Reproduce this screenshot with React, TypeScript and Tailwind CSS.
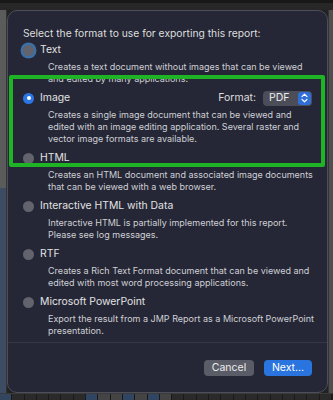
import React from 'react';

type RadioState = 'off' | 'on' | 'focus';

const OPTIONS: { label: string; desc: string[]; state: RadioState; format?: boolean }[] = [
  {
    label: 'Text',
    desc: ['Creates a text document without images that can be viewed', 'and edited by many applications.'],
    state: 'focus',
  },
  {
    label: 'Image',
    desc: [
      'Creates a single image document that can be viewed and',
      'edited with an image editing application. Several raster and',
      'vector image formats are available.',
    ],
    state: 'on',
    format: true,
  },
  {
    label: 'HTML',
    desc: ['Creates an HTML document and associated image documents', 'that can be viewed with a web browser.'],
    state: 'off',
  },
  {
    label: 'Interactive HTML with Data',
    desc: ['Interactive HTML is partially implemented for this report.', 'Please see log messages.'],
    state: 'off',
  },
  {
    label: 'RTF',
    desc: ['Creates a Rich Text Format document that can be viewed and', 'edited with most word processing applications.'],
    state: 'off',
  },
  {
    label: 'Microsoft PowerPoint',
    desc: ['Export the result from a JMP Report as a Microsoft PowerPoint', 'presentation.'],
    state: 'off',
  },
];

const RULER = [
  'bg-[#34465e]', 'bg-[#2a2a2a]', 'bg-[#2a2a2a]', 'bg-[#2a2a2a]', 'bg-[#2a2a2a]', 'bg-[#2a2a2a]',
  'bg-[#2a2a2a]', 'bg-[#2f4561]', 'bg-[#444]', 'bg-[#444]', 'bg-[#2f4561]', 'bg-[#444]',
  'bg-[#2f4561]', 'bg-[#444]', 'bg-[#2a2a2a]', 'bg-[#2a2a2a]', 'bg-[#2a2a2a]', 'bg-[#2a2a2a]',
  'bg-[#2a2a2a]', 'bg-[#2a2a2a]', 'bg-[#2a2a2a]', 'bg-[#2a2a2a]', 'bg-[#2a2a2a]', 'bg-[#2a2a2a]',
  'bg-[#2a2a2a]', 'bg-[#2a2a2a]', 'bg-[#2a2a2a]',
];

function Radio({ state }: { state: RadioState }) {
  if (state === 'on') {
    return (
      <span className="flex h-[11px] w-[11px] shrink-0 items-center justify-center rounded-full bg-[#2b76e5]">
        <span className="h-[4px] w-[4px] rounded-full bg-white" />
      </span>
    );
  }
  return (
    <span
      className={`h-[11px] w-[11px] shrink-0 rounded-full bg-[#62636c] ${
        state === 'focus' ? 'shadow-[0_0_0_2.5px_#3b6fa6]' : ''
      }`}
    />
  );
}

function FormatSelect() {
  return (
    <div className="ml-auto flex items-center gap-[7px]">
      <span className="text-[10.5px] text-[#dedede]">Format:</span>
      <div className="flex h-[15px] w-[49px] items-center justify-between rounded-[4px] bg-[#4b4d59] pl-[6px] pr-[1px]">
        <span className="text-[10.5px] text-[#ececec]">PDF</span>
        <span className="flex h-[13px] w-[13px] items-center justify-center rounded-[3px] bg-[#2f6fd8]">
          <svg width="7" height="10" viewBox="0 0 7 10" fill="none">
            <path d="M1 3.6 3.5 1.2 6 3.6M1 6.4 3.5 8.8 6 6.4" stroke="white" strokeWidth="1.2" strokeLinecap="round" strokeLinejoin="round" />
          </svg>
        </span>
      </div>
    </div>
  );
}

export default function App() {
  return (
    <div className="flex h-[400px] w-[333px] flex-col overflow-hidden bg-[#222] font-['Inter','Noto_Sans',sans-serif]">
      <div className="h-[10px] shrink-0 border-t-[3px] border-[#181818] bg-[#272727]" />
      <div className="flex min-h-0 flex-1">
        <div className="flex w-[7px] shrink-0 flex-col border-r border-[#333]">
          <div className="h-[178px] bg-[#5b5b5b]" />
          <div className="flex-1 bg-[#3d4c62]" />
        </div>
        <div className="relative flex w-[321px] shrink-0 flex-col rounded-[10px] border border-[#4c4e59] bg-[#252736]">
          <div className="px-[15px] pt-[15px]">
            <div className="h-[14px] text-[10.3px] leading-[14px] whitespace-nowrap text-[#dedede]">
              Select the format to use for exporting this report:
            </div>
            <div className="mt-[3px] flex flex-col gap-[6px]">
              {OPTIONS.map((o) => (
                <div key={o.label}>
                  <div className="flex h-[14px] items-center gap-[6px]">
                    <Radio state={o.state} />
                    <span className="text-[10.4px] leading-[14px] whitespace-nowrap text-[#e2e2e2]">{o.label}</span>
                    {o.format && <FormatSelect />}
                  </div>
                  <div className="mt-[4px] pl-[25px] text-[9px] leading-[12px] whitespace-nowrap text-[#cfd0d5]">
                    {o.desc.map((line) => (
                      <div key={line}>{line}</div>
                    ))}
                  </div>
                </div>
              ))}
            </div>
          </div>
          <div className="mt-[5px] h-px bg-[#363846]" />
          <div className="mt-[17px] flex justify-end gap-[10px] pr-[15px]">
            <button className="h-[16px] w-[50px] rounded-[4px] bg-[#5a5c67] text-[10.5px] text-[#ececec]">Cancel</button>
            <button className="h-[16px] w-[48px] rounded-[4px] bg-[#2a74e0] text-[10.5px] text-white">Next...</button>
          </div>

          <div className="pointer-events-none absolute left-[1px] top-[64px] h-[92px] w-[316px] rounded-[2px] border-[4px] border-[#1fb326]" />
        </div>
        <div className="flex-1 border-l border-[#333] bg-[#4f4f4f]" />
      </div>
      <div className="flex h-[7px] shrink-0 border-t border-[#3a3a3a] bg-[#1d1d1d]">
        {RULER.map((c, i) => (
          <div key={i} className={`h-full w-[12.3px] shrink-0 border-r border-[#1a1a1a] ${c}`} />
        ))}
      </div>
    </div>
  );
}
